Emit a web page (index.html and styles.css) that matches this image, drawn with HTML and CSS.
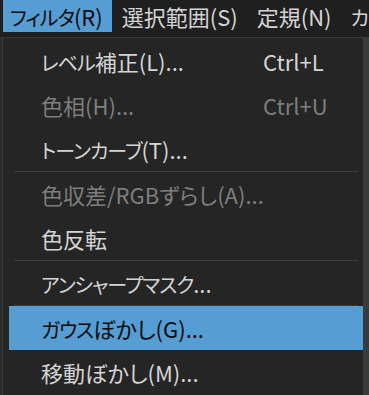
FILE: index.html
```html
<!DOCTYPE html>
<html lang="ja">
<head>
    <meta charset="UTF-8">
    <meta name="viewport" content="width=device-width, initial-scale=1.0">
    <title>フィルタ</title>
    <link rel="stylesheet" href="styles.css">
</head>
<body>

<!-- Menu bar -->
<div class="menubar">
    <span class="menu-title open"><span class="kana">フィルタ</span>(R)</span>
    <span class="menu-title">選択範囲(S)</span>
    <span class="menu-title">定規(N)</span>
    <span class="menu-title"><span class="kana">カ</span></span>
</div>

<!-- Filter dropdown -->
<div class="stage">
    <div class="dropdown">
        <div class="item"><span><span class="kana">レベル</span>補正(L)...</span><span class="key">Ctrl+L</span></div>
        <div class="item disabled"><span>色相(H)...</span><span class="key">Ctrl+U</span></div>
        <div class="item"><span><span class="kana">トーンカーブ</span>(T)...</span></div>
        <div class="sep"></div>
        <div class="item disabled"><span>色収差/RGBずらし(A)...</span></div>
        <div class="item"><span>色反転</span></div>
        <div class="sep"></div>
        <div class="item"><span><span class="kana">アンシャープマスク</span>...</span></div>
        <div class="sep"></div>
        <div class="item hover"><span><span class="kana">ガウス</span>ぼかし(G)...</span></div>
        <div class="item"><span>移動ぼかし(M)...</span></div>
    </div>
    <div class="backdrop"></div>
</div>

</body>
</html>
```

FILE: styles.css
```css
/* Global Styles */
body {
    margin: 0;
    padding: 0;
    height: 395px;
    background-color: #2c2c2c;
    font-family: "Noto Sans CJK JP", "Noto Sans", sans-serif;
    font-size: 22px;
    font-feature-settings: "palt";
    color: #d4d4d4;
    overflow: hidden;
}
/* katakana runs are narrower in the original UI font */
.kana {
    font-size: 20px;
    letter-spacing: -1px;
}
.menubar {
    display: flex;
    height: 37px;
    padding-left: 3px;
    background-color: #1f1f1f;
    white-space: nowrap;
    overflow: hidden;
}
.menu-title {
    height: 32px;
    line-height: 32px;
    padding: 0 9px 0 7px;
}
.menu-title + .menu-title {
    padding-left: 10px;
}
.menu-title.open {
    background-color: #569dd4;
    color: #0c0c0c;
}
.stage {
    display: flex;
    height: 358px;
    padding-left: 2px;
    overflow: hidden;
}
.dropdown {
    box-sizing: border-box;
    width: 362px;
    height: 358px;
    padding-top: 1px;
    border: 1px solid #3b3b3b;
    border-bottom: none;
    background-color: #252525;
}
.backdrop {
    flex: 1;
    background-color: #3a3a3a;
}
.item {
    display: grid;
    grid-template-columns: 222px auto;
    height: 44px;
    line-height: 44px;
    margin-left: 6px;
    padding-left: 32px;
    white-space: nowrap;
}
.item.disabled {
    color: #7e7e7e;
}
.item.hover {
    background-color: #569dd4;
    color: #0c0c0c;
}
.sep {
    height: 1px;
    margin: 0 5px 0 11px;
    background-color: #3e3e3e;
}
```
